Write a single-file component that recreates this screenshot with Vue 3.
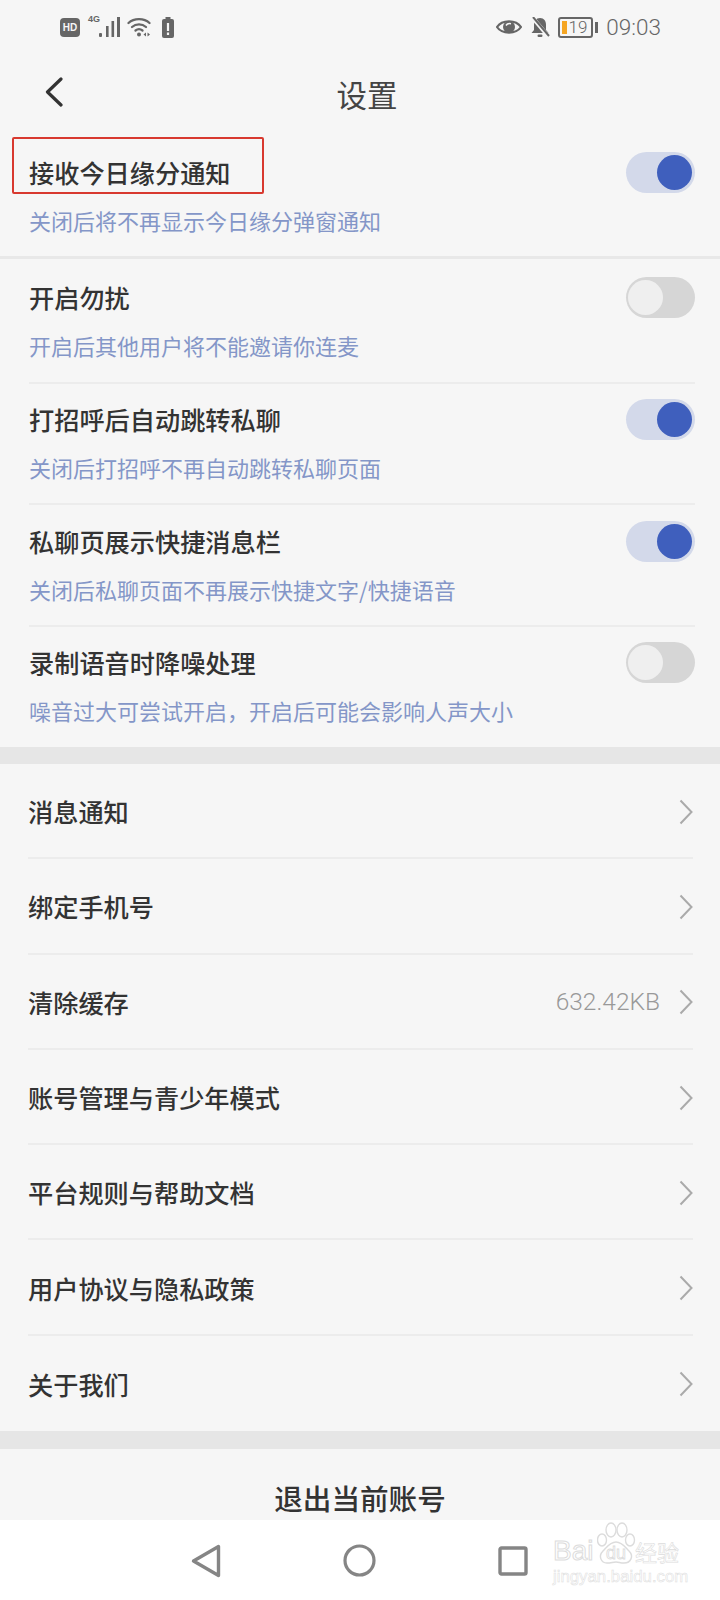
<template>
  <div class="page">
    <!-- status bar -->
    <div class="status-bar">
      <div class="status-left">
        <span class="hd">HD</span>
        <span class="net">
          <span class="net-text">4G</span>
          <svg width="32" height="22" viewBox="0 0 32 22"><g fill="#666"><rect x="11" y="17" width="3" height="4" rx="1"/><rect x="18" y="10" width="2.600" height="11"/><rect x="23.500" y="5" width="2.600" height="16"/><rect x="29" y="1" width="3" height="20"/></g></svg>
        </span>
        <svg class="wifi" width="24" height="20" viewBox="0 0 24 20" fill="none" stroke="#666" stroke-width="2.300" stroke-linecap="round"><path d="M1.500 6C7 .800 17 .800 22.500 6"/><path d="M5 10C9 6.500 15 6.500 19 10"/><path d="M8.500 13.500C10.500 12 13.500 12 15.500 13.500"/><circle cx="12" cy="17.500" r="2" fill="#666" stroke="none"/><path d="M19 15.500L16.500 17.500L19 19.500Z M20.500 15.500L23 17.500L20.500 19.500Z" fill="#666" stroke="none"/></svg>
        <svg width="12" height="21" viewBox="0 0 12 21"><rect x="3.500" y="0" width="5" height="2" fill="#666"/><rect x="0" y="2" width="12" height="19" rx="2" fill="#666"/><rect x="4.900" y="6" width="2.200" height="8" fill="#f6f6f6"/><rect x="4.900" y="15.500" width="2.200" height="2.500" fill="#f6f6f6"/></svg>
      </div>
      <div class="status-right">
        <svg width="26" height="18" viewBox="0 0 26 18"><path d="M1 9C6 1.500 20 1.500 25 9C20 16.500 6 16.500 1 9Z" fill="none" stroke="#666" stroke-width="2.200"/><circle cx="13" cy="9" r="6" fill="#666"/><path d="M10 7.500C11 5.800 13 5.300 15 5.800" stroke="#f6f6f6" stroke-width="1.500" fill="none"/></svg>
        <svg width="20" height="20" viewBox="0 0 20 20"><path d="M10 1C6 1 4 4 4 8V13L1.500 16H18.500L16 13V8C16 4 14 1 10 1Z" fill="#666"/><rect x="7.500" y="17.500" width="5" height="2.500" rx="1.200" fill="#666"/><path d="M2 0L18 19" stroke="#f6f6f6" stroke-width="4"/><path d="M3 0L19 19" stroke="#666" stroke-width="2"/></svg>
        <span class="battery">
          <span class="battery-body"><i class="battery-level"></i>19</span>
          <i class="battery-tip"></i>
        </span>
        <span class="time">09:03</span>
      </div>
    </div>

    <!-- nav bar -->
    <div class="nav-bar">
      <svg class="back" width="18" height="30" viewBox="0 0 18 30" fill="none" stroke="#333" stroke-width="3.200" stroke-linecap="round" stroke-linejoin="round"><path d="M16 2L2.500 15L16 28"/></svg>
      <span class="nav-title">设置</span>
    </div>

    <!-- switches -->
    <div
      v-for="(item, i) in switches"
      :key="item.title"
      :class="['switch-row', `row-${i + 1}`]"
    >
      <div class="switch-head">
        <span class="row-title">{{ item.title }}</span>
        <span :class="['toggle', { on: item.on }]"><i class="knob"></i></span>
      </div>
      <div class="row-sub">{{ item.sub }}</div>
      <div v-if="i === 0" class="red-box"></div>
    </div>

    <div class="band"></div>

    <!-- links -->
    <div v-for="(link, i) in links" :key="link.title" class="link-row">
      <span class="link-inner" :class="{ 'no-line': i === links.length - 1 }">
        <span class="row-title">{{ link.title }}</span>
        <span class="link-right">
          <span v-if="link.value" class="link-value">{{ link.value }}</span>
          <svg width="14" height="26" viewBox="0 0 14 26" fill="none" stroke="#aaa" stroke-width="2"><path d="M1.500 1.500L12.500 13L1.500 24.500"/></svg>
        </span>
      </span>
    </div>

    <div class="band small"></div>

    <div class="logout">退出当前账号</div>

    <!-- system nav -->
    <div class="sys-nav">
      <svg class="sys-back" width="30" height="34" viewBox="0 0 30 34" fill="none" stroke="#858585" stroke-width="3.400" stroke-linejoin="round"><path d="M27.500 2.500V31.500L2.500 17Z"/></svg>
      <svg class="sys-home" width="33" height="33" viewBox="0 0 33 33" fill="none" stroke="#858585" stroke-width="3.200"><circle cx="16.500" cy="16.500" r="14.500"/></svg>
      <svg class="sys-recent" width="30" height="30" viewBox="0 0 30 30" fill="none" stroke="#858585" stroke-width="3.400" stroke-linejoin="round"><rect x="2" y="2" width="26" height="26" rx="1.500"/></svg>

      <!-- watermark -->
      <div class="watermark">
        <svg class="paw" width="40" height="44" viewBox="0 0 40 44" fill="#fff" stroke="#dcdcdc" stroke-width="1.400"><ellipse cx="5" cy="18" rx="4.500" ry="6"/><ellipse cx="14" cy="8" rx="5" ry="7"/><ellipse cx="25" cy="8" rx="5" ry="7"/><ellipse cx="33" cy="18" rx="4.500" ry="6"/><path d="M19 20C25 20 28 25 32 29C37 34 34 41 27 41C23 41 22 40 19 40C16 40 14 41 10 41C4 41 1 34 6 29C10 25 13 20 19 20Z"/></svg>
        <div class="wm-top">
          <span class="wm-bai">Bai</span>
          <span class="wm-du">du</span>
          <span class="wm-cn">经验</span>
        </div>
        <div class="wm-url">jingyan.baidu.com</div>
      </div>
    </div>
  </div>
</template>

<script setup>
const switches = [
  { title: '接收今日缘分通知', sub: '关闭后将不再显示今日缘分弹窗通知', on: true },
  { title: '开启勿扰', sub: '开启后其他用户将不能邀请你连麦', on: false },
  { title: '打招呼后自动跳转私聊', sub: '关闭后打招呼不再自动跳转私聊页面', on: true },
  { title: '私聊页展示快捷消息栏', sub: '关闭后私聊页面不再展示快捷文字/快捷语音', on: true },
  { title: '录制语音时降噪处理', sub: '噪音过大可尝试开启，开启后可能会影响人声大小', on: false }
]

const links = [
  { title: '消息通知' },
  { title: '绑定手机号' },
  { title: '清除缓存', value: '632.42KB' },
  { title: '账号管理与青少年模式' },
  { title: '平台规则与帮助文档' },
  { title: '用户协议与隐私政策' },
  { title: '关于我们' }
]
</script>

<style>
html, body {
  margin: 0;
  background: #f6f6f6;
}
</style>

<style scoped>
.page {
  width: 720px;
  height: 1600px;
  overflow: hidden;
  position: relative;
  background: #f6f6f6;
  color: #333;
  font-family: "Noto Sans CJK SC", "Noto Sans", sans-serif;
}

.status-bar {
  height: 54px;
  display: flex;
  justify-content: space-between;
  align-items: center;
  padding: 0 59px 0 60px;
  box-sizing: border-box;
}
.status-left,
.status-right {
  display: flex;
  align-items: center;
}
.status-left { gap: 8px; }
.status-right { gap: 8px; }
.hd {
  width: 20px;
  height: 19px;
  border-radius: 4px;
  background: #666;
  color: #f6f6f6;
  font: 700 10px/19px "Liberation Sans", sans-serif;
  text-align: center;
}
.net {
  position: relative;
  display: block;
  width: 32px;
  height: 22px;
}
.net svg { display: block; }
.net-text {
  position: absolute;
  left: 0;
  top: -2px;
  font: 700 9px/10px "Liberation Sans", sans-serif;
  color: #666;
}
.wifi { margin: 0 3px 0 -1px; }
.battery {
  display: flex;
  align-items: center;
  gap: 2px;
}
.battery-body {
  position: relative;
  width: 35px;
  height: 21px;
  box-sizing: border-box;
  border: 2px solid #666;
  border-radius: 3px;
  color: #666;
  font: 300 17px/17px Roboto, sans-serif;
  text-align: right;
  padding-right: 4px;
}
.battery-level {
  position: absolute;
  left: 2px;
  top: 2px;
  width: 5px;
  height: 13px;
  background: #f5a623;
}
.battery-tip {
  width: 3px;
  height: 11px;
  background: #666;
}
.time {
  font: 300 22.5px/26px Roboto, sans-serif;
  color: #666;
}

.nav-bar {
  height: 80px;
  display: flex;
  align-items: center;
  justify-content: center;
  position: relative;
}
.back {
  position: absolute;
  left: 45px;
  top: 23px;
}
.nav-title {
  font-size: 30.5px;
  line-height: 78px;
  color: #444;
  transform: translateX(7px);
}

.switch-row {
  position: relative;
  margin: 0 25px 0 29px;
  padding-top: 17px;
  box-sizing: border-box;
  border-bottom: 2px solid #ececec;
}
.row-1 {
  margin: 0;
  padding: 20px 25px 0 29px;
  height: 125px;
  border-bottom: 3px solid #e8e8e8;
}
.row-2 { height: 125px; padding-top: 20px; }
.row-3 { height: 121px; }
.row-4 { height: 122px; padding-top: 18px; }
.row-5 { height: 120px; border-bottom: none; }

.switch-head {
  height: 37px;
  display: flex;
  align-items: center;
  justify-content: space-between;
}
.row-title {
  font-size: 25.2px;
  line-height: 37px;
  font-weight: 500;
  color: #333;
}
.row-sub {
  margin-top: 13px;
  font-size: 22px;
  line-height: 32px;
  color: #8496c8;
  white-space: nowrap;
}
.red-box {
  position: absolute;
  left: 12px;
  top: 3px;
  width: 252px;
  height: 57px;
  box-sizing: border-box;
  border: 2px solid #d8392f;
  border-radius: 2px;
}

.toggle {
  position: relative;
  display: block;
  width: 69px;
  height: 41px;
  border-radius: 21px;
  background: #d6d6d6;
}
.knob {
  position: absolute;
  left: 2px;
  top: 3px;
  width: 35px;
  height: 35px;
  border-radius: 50%;
  background: #efefef;
}
.toggle.on { background: #d3d9ea; }
.toggle.on .knob {
  left: 31px;
  background: #3f5fbd;
}

.band {
  height: 17px;
  background: #e6e6e6;
}
.band.small { height: 18px; }

.link-row {
  height: 95.3px;
  padding: 0 27px 0 28px;
  box-sizing: border-box;
}
.link-inner {
  height: 100%;
  display: flex;
  align-items: center;
  justify-content: space-between;
  box-sizing: border-box;
  border-bottom: 2px solid #ececec;
  padding-top: 2px;
}
.link-inner.no-line { border-bottom: none; }
.link-right {
  display: flex;
  align-items: center;
  gap: 19px;
}
.link-right svg { display: block; }
.link-value {
  font: 300 24.5px/30px Roboto, sans-serif;
  color: #999;
}

.logout {
  height: 71px;
  padding-top: 30px;
  box-sizing: border-box;
  text-align: center;
  font-size: 28.6px;
  line-height: 38px;
  font-weight: 500;
  color: #333;
  overflow: hidden;
}

.sys-nav {
  position: relative;
  height: 81px;
  background: #fff;
  display: flex;
  align-items: center;
  padding-left: 191px;
  box-sizing: border-box;
}
.sys-back { margin-right: 122px; }
.sys-home { margin-right: 122px; }

.watermark {
  position: absolute;
  left: 553px;
  top: 2px;
  width: 128px;
  height: 62px;
  color: #fff;
  font-family: "Liberation Sans", sans-serif;
  -webkit-text-stroke: 1px #dcdcdc;
}
.paw {
  position: absolute;
  left: 44px;
  top: 0;
}
.wm-top {
  position: relative;
  display: flex;
  align-items: flex-end;
  padding-top: 15px;
  height: 28px;
}
.wm-bai {
  width: 44px;
  font-size: 28px;
  line-height: 28px;
}
.wm-du {
  width: 38px;
  font-size: 18px;
  line-height: 24px;
  text-align: center;
  -webkit-text-stroke: 0.8px #dcdcdc;
}
.wm-cn {
  font-family: "Noto Sans CJK SC", sans-serif;
  font-size: 22px;
  line-height: 28px;
  white-space: nowrap;
  -webkit-text-stroke: 0.6px #dcdcdc;
}
.wm-url {
  margin-top: 3px;
  font-size: 16.8px;
  line-height: 18px;
  white-space: nowrap;
  -webkit-text-stroke: 0.5px #dcdcdc;
}
</style>
